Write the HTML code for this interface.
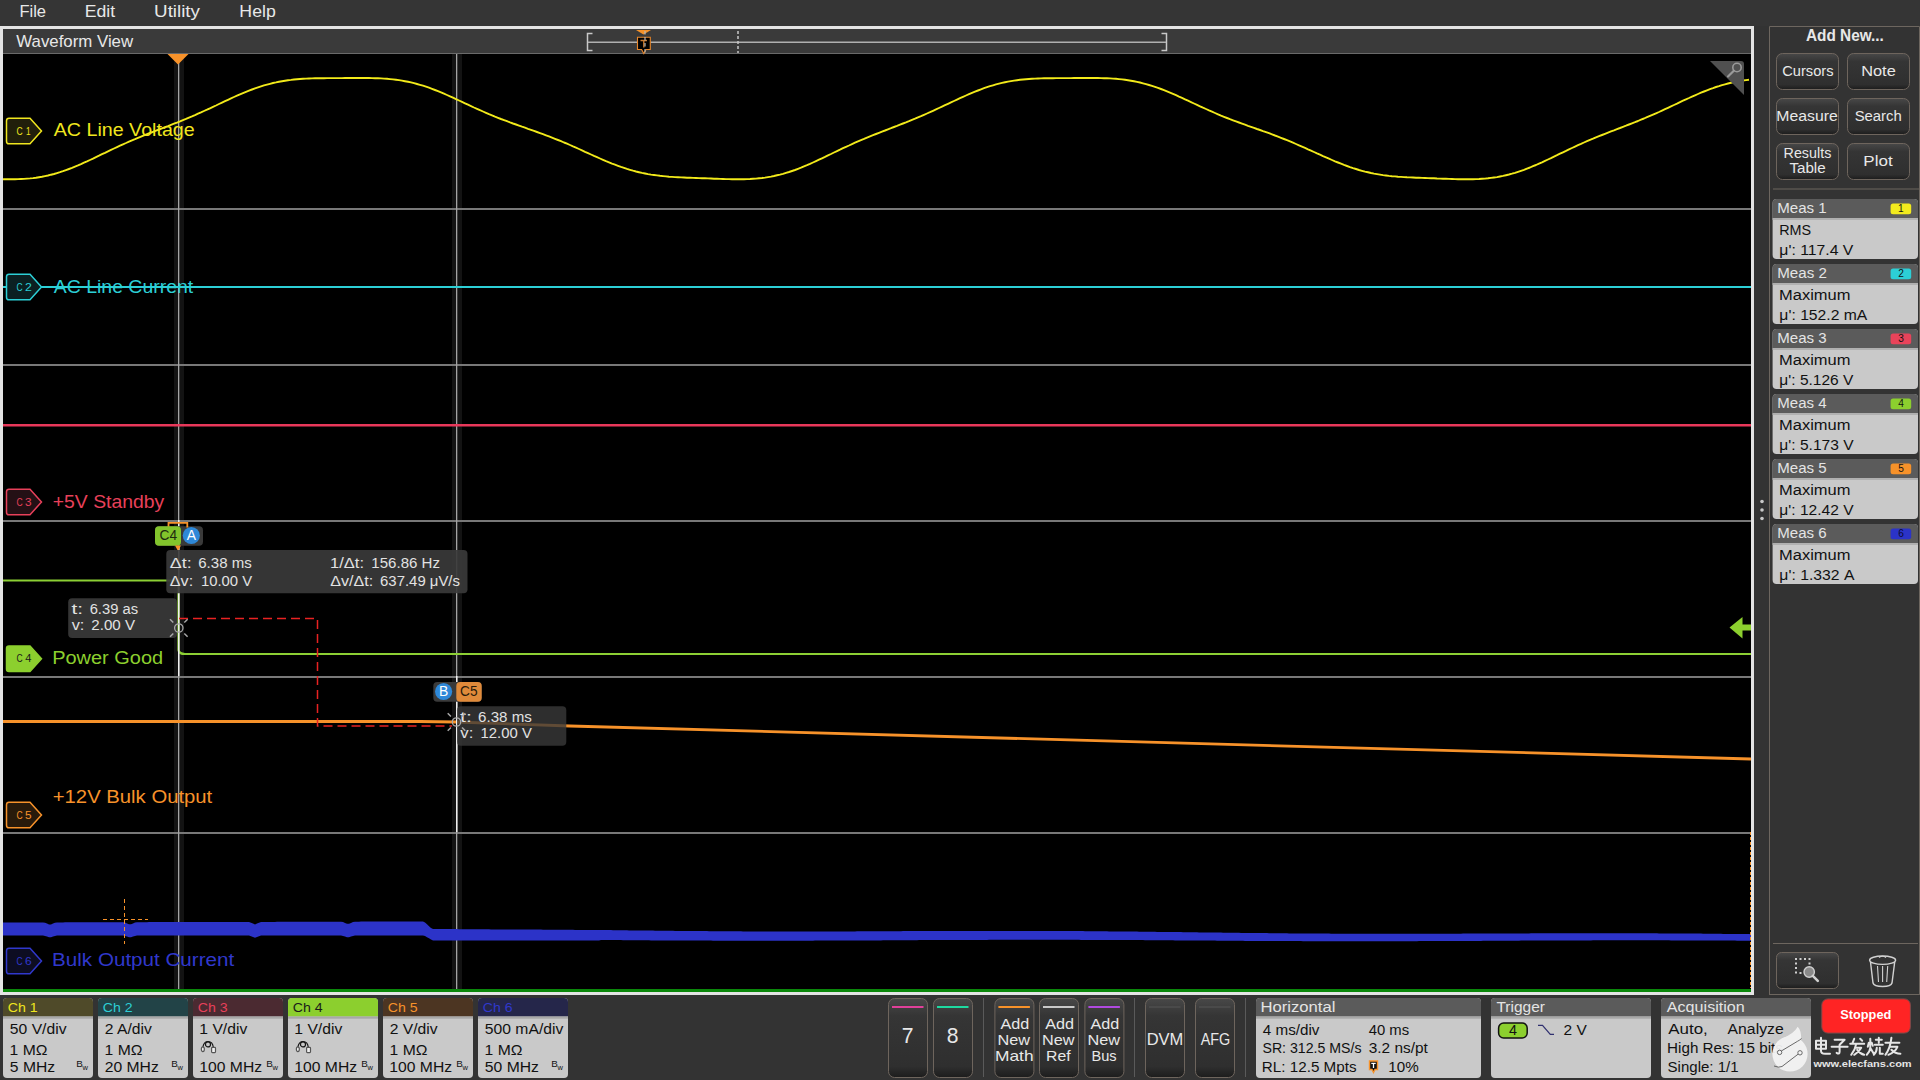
<!DOCTYPE html><html><head><meta charset="utf-8"><style>html,body{margin:0;padding:0;background:#333;overflow:hidden}svg{display:block}text{font-family:"Liberation Sans",sans-serif;white-space:pre}</style></head><body>
<svg width="1920" height="1080" viewBox="0 0 1920 1080">
<defs><linearGradient id="btn" x1="0" y1="0" x2="0" y2="1"><stop offset="0" stop-color="#484848"/><stop offset="0.22" stop-color="#353535"/><stop offset="0.86" stop-color="#2f2f2f"/><stop offset="1" stop-color="#1c1c1c"/></linearGradient><clipPath id="plotclip"><rect x="3" y="54" width="1748" height="935"/></clipPath></defs>
<rect x="0" y="0" width="1920" height="1080" rx="0" fill="#333" />
<rect x="0" y="0" width="1920" height="26" rx="0" fill="#353535" />
<text x="19.48" y="17.00" font-size="16.38" fill="#e8e8e8" textLength="26.59" lengthAdjust="spacingAndGlyphs" >File</text>
<text x="84.79" y="17.00" font-size="16.38" fill="#e8e8e8" textLength="30.35" lengthAdjust="spacingAndGlyphs" >Edit</text>
<text x="154.09" y="17.00" font-size="16.38" fill="#e8e8e8" textLength="45.90" lengthAdjust="spacingAndGlyphs" >Utility</text>
<text x="239.39" y="17.00" font-size="16.38" fill="#e8e8e8" textLength="36.35" lengthAdjust="spacingAndGlyphs" >Help</text>
<rect x="0" y="26" width="1754" height="969" rx="0" fill="#e4e4e4" />
<rect x="3" y="29" width="1748" height="24" rx="0" fill="#3a3a3a" />
<rect x="3" y="53" width="1748" height="1" rx="0" fill="#6a6a6a" />
<rect x="3" y="54" width="1748" height="935" rx="0" fill="#000" />
<rect x="3" y="989" width="1748" height="3" rx="0" fill="#0a870a" />
<text x="16.32" y="46.90" font-size="17.39" fill="#e8e8e8" textLength="116.82" lengthAdjust="spacingAndGlyphs" >Waveform View</text>
<g stroke="#c8c8c8" stroke-width="1.5" fill="none"><path d="M592.5 33.5 H587.5 V50.5 H592.5"/><path d="M1161.5 33.5 H1166.5 V50.5 H1161.5"/></g>
<rect x="588" y="41.5" width="578" height="1.5" rx="0" fill="#b0b0b0" />
<path d="M738 31 V53" stroke="#c8c8c8" stroke-width="1.5" stroke-dasharray="3 2"/>
<path d="M636 30 H651 L643.5 34.6 Z" fill="#f5922a"/>
<path d="M637.5 37.2 H650.3 V49.5 H646 L643.8 53.5 L641.6 49.5 H637.5 Z" fill="#000" stroke="#e8862a" stroke-width="1.1"/>
<path d="M640.5 40.5 H647 M643.8 40.5 V47.5" stroke="#c87a30" stroke-width="1.4"/>
<path d="M645 31 V53" stroke="#b8b8b8" stroke-width="1.2" stroke-dasharray="3.5 2.5"/>
<path d="M1769.5 994.5 V26.5 H1919.5 V994.5 Z" fill="none" stroke="#6d665f" stroke-width="1"/>
<g clip-path="url(#plotclip)">
<rect x="174" y="54" width="10" height="935" rx="0" fill="#131313" />
<rect x="452" y="54" width="10" height="935" rx="0" fill="#131313" />
<rect x="3" y="208" width="1748" height="2" rx="0" fill="#787878" />
<rect x="3" y="364" width="1748" height="2" rx="0" fill="#787878" />
<rect x="3" y="520" width="1748" height="2" rx="0" fill="#787878" />
<rect x="3" y="676" width="1748" height="2" rx="0" fill="#787878" />
<rect x="3" y="832" width="1748" height="2" rx="0" fill="#787878" />
<rect x="178" y="54" width="1.3" height="935" rx="0" fill="#a4a4a4" />
<rect x="456" y="54" width="1.3" height="935" rx="0" fill="#a4a4a4" />
<path d="M3 179.2 L6 179.2 L9 179.3 L12 179.3 L15 179.2 L18 179.1 L21 179.0 L24 178.9 L27 178.6 L30 178.4 L33 178.1 L36 177.7 L39 177.2 L42 176.7 L45 176.1 L48 175.5 L51 174.7 L54 174.0 L57 173.1 L60 172.2 L63 171.2 L66 170.1 L69 169.0 L72 167.9 L75 166.6 L78 165.4 L81 164.1 L84 162.7 L87 161.4 L90 160.0 L93 158.6 L96 157.1 L99 155.7 L102 154.2 L105 152.8 L108 151.3 L111 149.9 L114 148.5 L117 147.1 L120 145.7 L123 144.3 L126 143.0 L129 141.6 L132 140.3 L135 139.1 L138 137.8 L141 136.6 L144 135.4 L147 134.2 L150 133.0 L153 131.8 L156 130.7 L159 129.5 L162 128.4 L165 127.2 L168 126.1 L171 124.9 L174 123.7 L177 122.6 L180 121.4 L183 120.1 L186 118.9 L189 117.6 L192 116.4 L195 115.1 L198 113.7 L201 112.4 L204 111.0 L207 109.7 L210 108.3 L213 106.9 L216 105.5 L219 104.0 L222 102.6 L225 101.2 L228 99.8 L231 98.4 L234 97.0 L237 95.7 L240 94.4 L243 93.1 L246 91.9 L249 90.7 L252 89.5 L255 88.4 L258 87.4 L261 86.4 L264 85.4 L267 84.6 L270 83.8 L273 83.0 L276 82.4 L279 81.7 L282 81.2 L285 80.7 L288 80.2 L291 79.9 L294 79.5 L297 79.2 L300 79.0 L303 78.8 L306 78.6 L309 78.5 L312 78.4 L315 78.3 L318 78.3 L321 78.2 L324 78.2 L327 78.1 L330 78.1 L333 78.1 L336 78.1 L339 78.1 L342 78.1 L345 78.0 L348 78.0 L351 78.0 L354 78.0 L357 78.0 L360 78.0 L363 78.0 L366 78.0 L369 78.0 L372 78.1 L375 78.2 L378 78.3 L381 78.4 L384 78.6 L387 78.8 L390 79.1 L393 79.4 L396 79.7 L399 80.1 L402 80.6 L405 81.2 L408 81.8 L411 82.4 L414 83.2 L417 84.0 L420 84.8 L423 85.7 L426 86.7 L429 87.7 L432 88.8 L435 90.0 L438 91.2 L441 92.4 L444 93.7 L447 95.0 L450 96.3 L453 97.7 L456 99.1 L459 100.5 L462 101.9 L465 103.3 L468 104.7 L471 106.1 L474 107.5 L477 108.8 L480 110.2 L483 111.5 L486 112.8 L489 114.1 L492 115.3 L495 116.6 L498 117.8 L501 119.0 L504 120.1 L507 121.2 L510 122.4 L513 123.5 L516 124.5 L519 125.6 L522 126.7 L525 127.7 L528 128.8 L531 129.8 L534 130.9 L537 132.0 L540 133.1 L543 134.2 L546 135.3 L549 136.4 L552 137.6 L555 138.8 L558 140.0 L561 141.2 L564 142.5 L567 143.7 L570 145.0 L573 146.4 L576 147.7 L579 149.0 L582 150.4 L585 151.8 L588 153.1 L591 154.5 L594 155.9 L597 157.2 L600 158.5 L603 159.8 L606 161.1 L609 162.3 L612 163.6 L615 164.7 L618 165.8 L621 166.9 L624 167.9 L627 168.9 L630 169.8 L633 170.7 L636 171.5 L639 172.2 L642 172.9 L645 173.5 L648 174.1 L651 174.6 L654 175.0 L657 175.4 L660 175.8 L663 176.1 L666 176.4 L669 176.7 L672 176.9 L675 177.1 L678 177.2 L681 177.4 L684 177.5 L687 177.7 L690 177.8 L693 177.9 L696 178.0 L699 178.1 L702 178.2 L705 178.3 L708 178.4 L711 178.5 L714 178.7 L717 178.8 L720 178.9 L723 179.0 L726 179.1 L729 179.1 L732 179.2 L735 179.3 L738 179.3 L741 179.3 L744 179.2 L747 179.1 L750 179.0 L753 178.8 L756 178.6 L759 178.3 L762 178.0 L765 177.6 L768 177.1 L771 176.6 L774 176.0 L777 175.3 L780 174.6 L783 173.8 L786 172.9 L789 172.0 L792 171.0 L795 170.0 L798 168.8 L801 167.7 L804 166.4 L807 165.2 L810 163.9 L813 162.5 L816 161.1 L819 159.7 L822 158.3 L825 156.9 L828 155.4 L831 154.0 L834 152.5 L837 151.1 L840 149.7 L843 148.2 L846 146.8 L849 145.5 L852 144.1 L855 142.7 L858 141.4 L861 140.1 L864 138.9 L867 137.6 L870 136.4 L873 135.2 L876 134.0 L879 132.8 L882 131.6 L885 130.5 L888 129.3 L891 128.2 L894 127.0 L897 125.9 L900 124.7 L903 123.5 L906 122.4 L909 121.2 L912 119.9 L915 118.7 L918 117.4 L921 116.2 L924 114.8 L927 113.5 L930 112.2 L933 110.8 L936 109.4 L939 108.0 L942 106.6 L945 105.2 L948 103.8 L951 102.4 L954 101.0 L957 99.6 L960 98.2 L963 96.8 L966 95.5 L969 94.2 L972 92.9 L975 91.7 L978 90.5 L981 89.3 L984 88.2 L987 87.2 L990 86.2 L993 85.3 L996 84.4 L999 83.6 L1002 82.9 L1005 82.2 L1008 81.6 L1011 81.1 L1014 80.6 L1017 80.2 L1020 79.8 L1023 79.5 L1026 79.2 L1029 79.0 L1032 78.8 L1035 78.6 L1038 78.5 L1041 78.4 L1044 78.3 L1047 78.3 L1050 78.2 L1053 78.2 L1056 78.1 L1059 78.1 L1062 78.1 L1065 78.1 L1068 78.1 L1071 78.1 L1074 78.0 L1077 78.0 L1080 78.0 L1083 78.0 L1086 78.0 L1089 78.0 L1092 78.0 L1095 78.0 L1098 78.0 L1101 78.1 L1104 78.2 L1107 78.3 L1110 78.4 L1113 78.6 L1116 78.8 L1119 79.1 L1122 79.4 L1125 79.8 L1128 80.2 L1131 80.7 L1134 81.3 L1137 81.9 L1140 82.5 L1143 83.3 L1146 84.1 L1149 85.0 L1152 85.9 L1155 86.9 L1158 87.9 L1161 89.0 L1164 90.2 L1167 91.4 L1170 92.6 L1173 93.9 L1176 95.2 L1179 96.6 L1182 97.9 L1185 99.3 L1188 100.7 L1191 102.1 L1194 103.5 L1197 104.9 L1200 106.3 L1203 107.7 L1206 109.0 L1209 110.4 L1212 111.7 L1215 113.0 L1218 114.3 L1221 115.6 L1224 116.8 L1227 118.0 L1230 119.2 L1233 120.3 L1236 121.4 L1239 122.5 L1242 123.6 L1245 124.7 L1248 125.8 L1251 126.8 L1254 127.9 L1257 129.0 L1260 130.0 L1263 131.1 L1266 132.1 L1269 133.2 L1272 134.3 L1275 135.5 L1278 136.6 L1281 137.8 L1284 139.0 L1287 140.2 L1290 141.4 L1293 142.7 L1296 144.0 L1299 145.3 L1302 146.6 L1305 147.9 L1308 149.3 L1311 150.6 L1314 152.0 L1317 153.4 L1320 154.7 L1323 156.1 L1326 157.4 L1329 158.7 L1332 160.0 L1335 161.3 L1338 162.5 L1341 163.7 L1344 164.9 L1347 166.0 L1350 167.1 L1353 168.1 L1356 169.0 L1359 170.0 L1362 170.8 L1365 171.6 L1368 172.3 L1371 173.0 L1374 173.6 L1377 174.1 L1380 174.6 L1383 175.1 L1386 175.5 L1389 175.9 L1392 176.2 L1395 176.4 L1398 176.7 L1401 176.9 L1404 177.1 L1407 177.3 L1410 177.4 L1413 177.5 L1416 177.7 L1419 177.8 L1422 177.9 L1425 178.0 L1428 178.1 L1431 178.2 L1434 178.3 L1437 178.5 L1440 178.6 L1443 178.7 L1446 178.8 L1449 178.9 L1452 179.0 L1455 179.1 L1458 179.2 L1461 179.2 L1464 179.3 L1467 179.3 L1470 179.3 L1473 179.2 L1476 179.1 L1479 179.0 L1482 178.8 L1485 178.6 L1488 178.3 L1491 177.9 L1494 177.5 L1497 177.1 L1500 176.5 L1503 175.9 L1506 175.2 L1509 174.5 L1512 173.7 L1515 172.8 L1518 171.8 L1521 170.8 L1524 169.8 L1527 168.6 L1530 167.5 L1533 166.2 L1536 165.0 L1539 163.6 L1542 162.3 L1545 160.9 L1548 159.5 L1551 158.1 L1554 156.6 L1557 155.2 L1560 153.7 L1563 152.3 L1566 150.9 L1569 149.4 L1572 148.0 L1575 146.6 L1578 145.2 L1581 143.9 L1584 142.5 L1587 141.2 L1590 139.9 L1593 138.7 L1596 137.4 L1599 136.2 L1602 135.0 L1605 133.8 L1608 132.6 L1611 131.4 L1614 130.3 L1617 129.1 L1620 128.0 L1623 126.8 L1626 125.7 L1629 124.5 L1632 123.3 L1635 122.2 L1638 121.0 L1641 119.7 L1644 118.5 L1647 117.2 L1650 115.9 L1653 114.6 L1656 113.3 L1659 112.0 L1662 110.6 L1665 109.2 L1668 107.8 L1671 106.4 L1674 105.0 L1677 103.6 L1680 102.1 L1683 100.7 L1686 99.3 L1689 98.0 L1692 96.6 L1695 95.3 L1698 94.0 L1701 92.7 L1704 91.5 L1707 90.3 L1710 89.1 L1713 88.1 L1716 87.0 L1719 86.1 L1722 85.1 L1725 84.3 L1728 83.5 L1731 82.8 L1734 82.1 L1737 81.5 L1740 81.0 L1743 80.5 L1746 80.1 L1749 79.7" fill="none" stroke="#f2ea1a" stroke-width="1.9" stroke-linejoin="round"/>
<rect x="3" y="286" width="1748" height="2" rx="0" fill="#2ccfd6" />
<path d="M9 118.2 H30 L41.5 131.0 L30 143.8 H9 Q6.5 143.8 6.5 141.2 V120.8 Q6.5 118.2 9 118.2 Z" fill="#211f0b" stroke="#f0e61e" stroke-width="1.5"/>
<text x="16.47" y="134.60" font-size="10.14" fill="#f0e61e" textLength="6.14" lengthAdjust="spacingAndGlyphs" >C</text>
<text x="25.88" y="134.60" font-size="10.14" fill="#f0e61e" textLength="4.60" lengthAdjust="spacingAndGlyphs" >1</text>
<text x="53.75" y="136.30" font-size="19.28" fill="#f0e61e" textLength="140.93" lengthAdjust="spacingAndGlyphs" >AC Line Voltage</text>
<path d="M9 274.2 H30 L41.5 287.0 L30 299.8 H9 Q6.5 299.8 6.5 297.2 V276.8 Q6.5 274.2 9 274.2 Z" fill="#0b2022" stroke="#2ccfd6" stroke-width="1.5"/>
<text x="16.47" y="290.60" font-size="10.14" fill="#2ccfd6" textLength="6.14" lengthAdjust="spacingAndGlyphs" >C</text>
<text x="24.98" y="290.60" font-size="10.14" fill="#2ccfd6" textLength="6.85" lengthAdjust="spacingAndGlyphs" >2</text>
<text x="53.75" y="292.80" font-size="19.28" fill="#2ccfd6" textLength="139.50" lengthAdjust="spacingAndGlyphs" >AC Line Current</text>
<path d="M9 489.2 H30 L41.5 502.0 L30 514.8 H9 Q6.5 514.8 6.5 512.2 V491.8 Q6.5 489.2 9 489.2 Z" fill="#241015" stroke="#e8405a" stroke-width="1.5"/>
<text x="16.47" y="505.60" font-size="10.14" fill="#e8405a" textLength="6.14" lengthAdjust="spacingAndGlyphs" >C</text>
<text x="25.13" y="505.60" font-size="10.14" fill="#e8405a" textLength="6.56" lengthAdjust="spacingAndGlyphs" >3</text>
<text x="52.78" y="507.50" font-size="19.28" fill="#e8405a" textLength="111.56" lengthAdjust="spacingAndGlyphs" >+5V Standby</text>
<path d="M9 646.0 H30 L41.5 658.7 L30 671.5 H9 Q6.5 671.5 6.5 669.0 V648.5 Q6.5 646.0 9 646.0 Z" fill="#8ccf2e" stroke="#8ccf2e" stroke-width="1.5"/>
<text x="16.47" y="662.30" font-size="10.14" fill="#1a1a1a" textLength="6.14" lengthAdjust="spacingAndGlyphs" >C</text>
<text x="25.38" y="662.30" font-size="10.14" fill="#1a1a1a" textLength="6.17" lengthAdjust="spacingAndGlyphs" >4</text>
<text x="52.15" y="663.80" font-size="19.28" fill="#8ccf2e" textLength="110.97" lengthAdjust="spacingAndGlyphs" >Power Good</text>
<path d="M9 802.2 H30 L41.5 815.0 L30 827.8 H9 Q6.5 827.8 6.5 825.2 V804.8 Q6.5 802.2 9 802.2 Z" fill="#281a0b" stroke="#f7922a" stroke-width="1.5"/>
<text x="16.47" y="818.60" font-size="10.14" fill="#f7922a" textLength="6.14" lengthAdjust="spacingAndGlyphs" >C</text>
<text x="25.13" y="818.60" font-size="10.14" fill="#f7922a" textLength="6.56" lengthAdjust="spacingAndGlyphs" >5</text>
<text x="52.74" y="802.90" font-size="19.28" fill="#f7922a" textLength="159.54" lengthAdjust="spacingAndGlyphs" >+12V Bulk Output</text>
<path d="M9 948.2 H30 L41.5 961.0 L30 973.8 H9 Q6.5 973.8 6.5 971.2 V950.8 Q6.5 948.2 9 948.2 Z" fill="#0d0d22" stroke="#3038cc" stroke-width="1.5"/>
<text x="16.47" y="964.60" font-size="10.14" fill="#3038cc" textLength="6.14" lengthAdjust="spacingAndGlyphs" >C</text>
<text x="25.00" y="964.60" font-size="10.14" fill="#3038cc" textLength="6.70" lengthAdjust="spacingAndGlyphs" >6</text>
<text x="52.10" y="965.90" font-size="19.28" fill="#3038cc" textLength="182.10" lengthAdjust="spacingAndGlyphs" >Bulk Output Current</text>
<rect x="3" y="424" width="1748" height="2.5" rx="0" fill="#e8385a" />
<path d="M3 580.5 L178.5 580.5 L178.5 650 Q179 654 185 654 L1751 654" fill="none" stroke="#8ccf34" stroke-width="2.2"/>
<path d="M3 721.5 L420 721.5 L456 722 L570 726 L1751 759" fill="none" stroke="#f7922a" stroke-width="2.8"/>
<path d="M3 922.5 L5 922.5 L7 922.5 L9 922.5 L11 922.5 L13 922.5 L15 922.5 L17 922.5 L19 922.5 L21 922.5 L23 922.4 L25 922.4 L27 922.4 L29 922.4 L31 922.4 L33 922.4 L35 922.4 L37 922.4 L39 922.4 L41 922.4 L43 922.4 L45 922.8 L47 923.6 L49 924.5 L51 924.5 L53 923.6 L55 922.8 L57 922.4 L59 922.4 L61 922.4 L63 922.4 L65 922.3 L67 922.3 L69 922.3 L71 922.3 L73 922.3 L75 922.3 L77 922.3 L79 922.3 L81 922.3 L83 922.3 L85 922.3 L87 922.3 L89 922.3 L91 922.3 L93 922.3 L95 922.3 L97 922.3 L99 922.3 L101 922.3 L103 922.3 L105 922.3 L107 922.2 L109 922.2 L111 922.2 L113 922.2 L115 922.2 L117 922.2 L119 922.2 L121 922.2 L123 922.2 L125 922.6 L127 923.5 L129 924.3 L131 924.3 L133 923.4 L135 922.6 L137 922.2 L139 922.2 L141 922.2 L143 922.2 L145 922.2 L147 922.2 L149 922.1 L151 922.1 L153 922.1 L155 922.1 L157 922.1 L159 922.1 L161 922.1 L163 922.1 L165 922.1 L167 922.1 L169 922.1 L171 922.1 L173 922.1 L175 922.1 L177 922.1 L179 922.1 L181 922.1 L183 922.1 L185 922.1 L187 922.1 L189 922.1 L191 922.0 L193 922.0 L195 922.0 L197 922.0 L199 922.0 L201 922.0 L203 922.0 L205 922.0 L207 922.0 L209 922.0 L211 922.0 L213 922.0 L215 922.0 L217 922.0 L219 922.0 L221 922.0 L223 922.0 L225 922.0 L227 922.0 L229 922.0 L231 922.0 L233 922.0 L235 921.9 L237 921.9 L239 921.9 L241 921.9 L243 921.9 L245 921.9 L247 921.9 L249 921.9 L251 922.7 L253 923.6 L255 924.4 L257 923.6 L259 922.7 L261 921.9 L263 921.9 L265 921.9 L267 921.9 L269 921.9 L271 921.9 L273 921.9 L275 921.9 L277 921.8 L279 921.8 L281 921.8 L283 921.8 L285 921.8 L287 921.8 L289 921.8 L291 921.8 L293 921.8 L295 921.8 L297 921.8 L299 921.8 L301 921.8 L303 921.8 L305 921.8 L307 921.8 L309 921.8 L311 921.8 L313 921.8 L315 921.8 L317 921.8 L319 921.7 L321 921.7 L323 921.7 L325 921.7 L327 921.7 L329 921.7 L331 921.7 L333 921.7 L335 921.7 L337 921.7 L339 921.7 L341 921.7 L343 922.1 L345 922.9 L347 923.8 L349 923.8 L351 922.9 L353 922.1 L355 921.7 L357 921.7 L359 921.7 L361 921.6 L363 921.6 L365 921.6 L367 921.6 L369 921.6 L371 921.6 L373 921.6 L375 921.6 L377 921.6 L379 921.6 L381 921.6 L383 921.6 L385 921.6 L387 921.6 L389 921.6 L391 921.6 L393 921.6 L395 921.6 L397 921.6 L399 921.6 L401 921.6 L403 921.5 L405 921.5 L407 921.5 L409 921.5 L411 921.5 L413 921.5 L415 921.5 L417 921.5 L419 921.5 L421 921.5 L423 921.5 L425 922.4 L427 924.3 L429 926.2 L431 928.1 L433 929.0 L435 929.0 L437 929.0 L439 929.0 L441 929.1 L443 929.1 L445 929.1 L447 929.1 L449 929.1 L451 929.1 L453 929.1 L455 929.1 L457 929.1 L459 929.2 L461 929.2 L463 929.2 L465 929.2 L467 929.2 L469 929.2 L471 929.2 L473 929.2 L475 929.3 L477 929.3 L479 929.3 L481 929.3 L483 929.3 L485 929.3 L487 929.3 L489 929.3 L491 929.4 L493 929.4 L495 929.4 L497 929.4 L499 929.4 L501 929.4 L503 929.4 L505 929.4 L507 929.4 L509 929.5 L511 929.5 L513 929.5 L515 929.5 L517 929.5 L519 929.5 L521 929.5 L523 929.5 L525 929.6 L527 929.6 L529 929.6 L531 929.6 L533 929.6 L535 929.6 L537 929.6 L539 929.6 L541 929.6 L543 929.7 L545 929.7 L547 929.7 L549 929.7 L551 929.7 L553 929.7 L555 929.7 L557 929.7 L559 929.8 L561 929.8 L563 929.8 L565 929.8 L567 929.8 L569 929.8 L571 929.8 L573 929.8 L575 929.9 L577 929.9 L579 929.9 L581 929.9 L583 929.9 L585 929.9 L587 929.9 L589 929.9 L591 929.9 L593 930.0 L595 930.0 L597 930.0 L599 930.0 L601 930.0 L603 930.0 L605 930.1 L607 930.1 L609 930.1 L611 930.1 L613 930.2 L615 930.2 L617 930.2 L619 930.2 L621 930.3 L623 930.3 L625 930.3 L627 930.3 L629 930.4 L631 930.4 L633 930.4 L635 930.4 L637 930.4 L639 930.5 L641 930.5 L643 930.5 L645 930.5 L647 930.6 L649 930.6 L651 930.6 L653 930.6 L655 930.7 L657 930.7 L659 930.7 L661 930.7 L663 930.7 L665 930.8 L667 930.8 L669 930.8 L671 930.8 L673 930.8 L675 930.9 L677 930.9 L679 930.9 L681 930.9 L683 930.9 L685 931.0 L687 931.0 L689 931.0 L691 931.0 L693 931.0 L695 931.0 L697 931.1 L699 931.1 L701 931.1 L703 931.1 L705 931.1 L707 931.1 L709 931.2 L711 931.2 L713 931.2 L715 931.2 L717 931.2 L719 931.2 L721 931.2 L723 931.3 L725 931.3 L727 931.3 L729 931.3 L731 931.3 L733 931.3 L735 931.3 L737 931.3 L739 931.3 L741 931.3 L743 931.4 L745 931.4 L747 931.4 L749 931.4 L751 931.4 L753 931.4 L755 931.4 L757 931.4 L759 931.4 L761 931.4 L763 931.4 L765 931.4 L767 931.4 L769 931.4 L771 931.4 L773 931.5 L775 931.5 L777 931.5 L779 931.5 L781 931.5 L783 931.5 L785 931.5 L787 931.5 L789 931.5 L791 931.5 L793 931.5 L795 931.5 L797 931.5 L799 931.5 L801 931.5 L803 931.5 L805 931.5 L807 931.5 L809 931.5 L811 931.5 L813 931.5 L815 931.5 L817 931.5 L819 931.5 L821 931.4 L823 931.4 L825 931.4 L827 931.4 L829 931.4 L831 931.4 L833 931.4 L835 931.4 L837 931.4 L839 931.4 L841 931.4 L843 931.4 L845 931.4 L847 931.4 L849 931.4 L851 931.4 L853 931.4 L855 931.4 L857 931.3 L859 931.3 L861 931.3 L863 931.3 L865 931.3 L867 931.3 L869 931.3 L871 931.3 L873 931.3 L875 931.3 L877 931.3 L879 931.3 L881 931.2 L883 931.2 L885 931.2 L887 931.2 L889 931.2 L891 931.2 L893 931.2 L895 931.2 L897 931.2 L899 931.2 L901 931.2 L903 931.1 L905 931.1 L907 931.1 L909 931.1 L911 931.1 L913 931.1 L915 931.1 L917 931.1 L919 931.1 L921 931.1 L923 931.1 L925 931.1 L927 931.0 L929 931.0 L931 931.0 L933 931.0 L935 931.0 L937 931.0 L939 931.0 L941 931.0 L943 931.0 L945 931.0 L947 931.0 L949 931.0 L951 931.0 L953 930.9 L955 930.9 L957 930.9 L959 930.9 L961 930.9 L963 930.9 L965 930.9 L967 930.9 L969 930.9 L971 930.9 L973 930.9 L975 930.9 L977 930.9 L979 930.9 L981 930.9 L983 930.9 L985 930.9 L987 930.9 L989 930.9 L991 930.9 L993 930.9 L995 930.9 L997 930.9 L999 930.9 L1001 930.9 L1003 930.9 L1005 930.9 L1007 930.9 L1009 930.9 L1011 930.9 L1013 930.9 L1015 930.9 L1017 930.9 L1019 930.9 L1021 930.9 L1023 930.9 L1025 930.9 L1027 930.9 L1029 930.9 L1031 930.9 L1033 930.9 L1035 930.9 L1037 930.9 L1039 930.9 L1041 930.9 L1043 930.9 L1045 930.9 L1047 930.9 L1049 931.0 L1051 931.0 L1053 931.0 L1055 931.0 L1057 931.0 L1059 931.0 L1061 931.0 L1063 931.0 L1065 931.0 L1067 931.0 L1069 931.1 L1071 931.1 L1073 931.1 L1075 931.1 L1077 931.1 L1079 931.1 L1081 931.1 L1083 931.1 L1085 931.2 L1087 931.2 L1089 931.2 L1091 931.2 L1093 931.2 L1095 931.2 L1097 931.3 L1099 931.3 L1101 931.3 L1103 931.3 L1105 931.3 L1107 931.3 L1109 931.4 L1111 931.4 L1113 931.4 L1115 931.4 L1117 931.4 L1119 931.4 L1121 931.5 L1123 931.5 L1125 931.5 L1127 931.5 L1129 931.5 L1131 931.6 L1133 931.6 L1135 931.6 L1137 931.6 L1139 931.7 L1141 931.7 L1143 931.7 L1145 931.7 L1147 931.7 L1149 931.8 L1151 931.8 L1153 931.8 L1155 931.8 L1157 931.9 L1159 931.9 L1161 931.9 L1163 931.9 L1165 931.9 L1167 932.0 L1169 932.0 L1171 932.0 L1173 932.0 L1175 932.1 L1177 932.1 L1179 932.1 L1181 932.1 L1183 932.2 L1185 932.2 L1187 932.2 L1189 932.2 L1191 932.3 L1193 932.3 L1195 932.3 L1197 932.3 L1199 932.4 L1201 932.4 L1203 932.4 L1205 932.4 L1207 932.5 L1209 932.5 L1211 932.5 L1213 932.5 L1215 932.6 L1217 932.6 L1219 932.6 L1221 932.6 L1223 932.7 L1225 932.7 L1227 932.7 L1229 932.7 L1231 932.8 L1233 932.8 L1235 932.8 L1237 932.8 L1239 932.8 L1241 932.9 L1243 932.9 L1245 932.9 L1247 932.9 L1249 933.0 L1251 933.0 L1253 933.0 L1255 933.0 L1257 933.0 L1259 933.1 L1261 933.1 L1263 933.1 L1265 933.1 L1267 933.1 L1269 933.2 L1271 933.2 L1273 933.2 L1275 933.2 L1277 933.2 L1279 933.3 L1281 933.3 L1283 933.3 L1285 933.3 L1287 933.3 L1289 933.4 L1291 933.4 L1293 933.4 L1295 933.4 L1297 933.4 L1299 933.4 L1301 933.5 L1303 933.5 L1305 933.5 L1307 933.5 L1309 933.5 L1311 933.5 L1313 933.5 L1315 933.6 L1317 933.6 L1319 933.6 L1321 933.6 L1323 933.6 L1325 933.6 L1327 933.6 L1329 933.6 L1331 933.7 L1333 933.7 L1335 933.7 L1337 933.7 L1339 933.7 L1341 933.7 L1343 933.7 L1345 933.7 L1347 933.7 L1349 933.7 L1351 933.7 L1353 933.7 L1355 933.8 L1357 933.8 L1359 933.8 L1361 933.8 L1363 933.8 L1365 933.8 L1367 933.8 L1369 933.8 L1371 933.8 L1373 933.8 L1375 933.8 L1377 933.8 L1379 933.8 L1381 933.8 L1383 933.8 L1385 933.8 L1387 933.8 L1389 933.8 L1391 933.8 L1393 933.8 L1395 933.8 L1397 933.8 L1399 933.8 L1401 933.8 L1403 933.8 L1405 933.8 L1407 933.8 L1409 933.8 L1411 933.8 L1413 933.8 L1415 933.8 L1417 933.8 L1419 933.8 L1421 933.8 L1423 933.8 L1425 933.8 L1427 933.8 L1429 933.8 L1431 933.8 L1433 933.7 L1435 933.7 L1437 933.7 L1439 933.7 L1441 933.7 L1443 933.7 L1445 933.7 L1447 933.7 L1449 933.7 L1451 933.7 L1453 933.7 L1455 933.7 L1457 933.7 L1459 933.7 L1461 933.7 L1463 933.6 L1465 933.6 L1467 933.6 L1469 933.6 L1471 933.6 L1473 933.6 L1475 933.6 L1477 933.6 L1479 933.6 L1481 933.6 L1483 933.6 L1485 933.6 L1487 933.5 L1489 933.5 L1491 933.5 L1493 933.5 L1495 933.5 L1497 933.5 L1499 933.5 L1501 933.5 L1503 933.5 L1505 933.5 L1507 933.5 L1509 933.4 L1511 933.4 L1513 933.4 L1515 933.4 L1517 933.4 L1519 933.4 L1521 933.4 L1523 933.4 L1525 933.4 L1527 933.4 L1529 933.4 L1531 933.3 L1533 933.3 L1535 933.3 L1537 933.3 L1539 933.3 L1541 933.3 L1543 933.3 L1545 933.3 L1547 933.3 L1549 933.3 L1551 933.3 L1553 933.3 L1555 933.3 L1557 933.3 L1559 933.3 L1561 933.3 L1563 933.2 L1565 933.2 L1567 933.2 L1569 933.2 L1571 933.2 L1573 933.2 L1575 933.2 L1577 933.2 L1579 933.2 L1581 933.2 L1583 933.2 L1585 933.2 L1587 933.2 L1589 933.2 L1591 933.2 L1593 933.2 L1595 933.2 L1597 933.2 L1599 933.2 L1601 933.2 L1603 933.2 L1605 933.2 L1607 933.2 L1609 933.2 L1611 933.2 L1613 933.2 L1615 933.2 L1617 933.2 L1619 933.2 L1621 933.2 L1623 933.2 L1625 933.2 L1627 933.2 L1629 933.2 L1631 933.2 L1633 933.2 L1635 933.3 L1637 933.3 L1639 933.3 L1641 933.3 L1643 933.3 L1645 933.3 L1647 933.3 L1649 933.3 L1651 933.3 L1653 933.3 L1655 933.3 L1657 933.3 L1659 933.4 L1661 933.4 L1663 933.4 L1665 933.4 L1667 933.4 L1669 933.4 L1671 933.4 L1673 933.4 L1675 933.4 L1677 933.5 L1679 933.5 L1681 933.5 L1683 933.5 L1685 933.5 L1687 933.5 L1689 933.5 L1691 933.6 L1693 933.6 L1695 933.6 L1697 933.6 L1699 933.6 L1701 933.6 L1703 933.7 L1705 933.7 L1707 933.7 L1709 933.7 L1711 933.7 L1713 933.8 L1715 933.8 L1717 933.8 L1719 933.8 L1721 933.8 L1723 933.9 L1725 933.9 L1727 933.9 L1729 933.9 L1731 933.9 L1733 934.0 L1735 934.0 L1737 934.0 L1739 934.0 L1741 934.0 L1743 934.1 L1745 934.1 L1747 934.1 L1749 934.1 L1751 934.2 L1751 940.7 L1749 940.7 L1747 940.7 L1745 940.7 L1743 940.7 L1741 940.7 L1739 940.7 L1737 940.7 L1735 940.6 L1733 940.6 L1731 940.6 L1729 940.6 L1727 940.6 L1725 940.6 L1723 940.6 L1721 940.6 L1719 940.5 L1717 940.5 L1715 940.5 L1713 940.5 L1711 940.5 L1709 940.5 L1707 940.5 L1705 940.5 L1703 940.5 L1701 940.5 L1699 940.5 L1697 940.4 L1695 940.4 L1693 940.4 L1691 940.4 L1689 940.4 L1687 940.4 L1685 940.4 L1683 940.4 L1681 940.4 L1679 940.4 L1677 940.4 L1675 940.4 L1673 940.4 L1671 940.4 L1669 940.3 L1667 940.3 L1665 940.3 L1663 940.3 L1661 940.3 L1659 940.3 L1657 940.3 L1655 940.3 L1653 940.3 L1651 940.3 L1649 940.3 L1647 940.3 L1645 940.3 L1643 940.3 L1641 940.3 L1639 940.3 L1637 940.3 L1635 940.3 L1633 940.3 L1631 940.3 L1629 940.3 L1627 940.3 L1625 940.3 L1623 940.3 L1621 940.3 L1619 940.3 L1617 940.3 L1615 940.3 L1613 940.3 L1611 940.3 L1609 940.3 L1607 940.3 L1605 940.3 L1603 940.3 L1601 940.3 L1599 940.3 L1597 940.3 L1595 940.3 L1593 940.3 L1591 940.4 L1589 940.4 L1587 940.4 L1585 940.4 L1583 940.4 L1581 940.4 L1579 940.4 L1577 940.4 L1575 940.4 L1573 940.4 L1571 940.4 L1569 940.4 L1567 940.4 L1565 940.4 L1563 940.4 L1561 940.5 L1559 940.5 L1557 940.5 L1555 940.5 L1553 940.5 L1551 940.5 L1549 940.5 L1547 940.5 L1545 940.5 L1543 940.5 L1541 940.5 L1539 940.6 L1537 940.6 L1535 940.6 L1533 940.6 L1531 940.6 L1529 940.6 L1527 940.6 L1525 940.6 L1523 940.6 L1521 940.6 L1519 940.7 L1517 940.7 L1515 940.7 L1513 940.7 L1511 940.7 L1509 940.7 L1507 940.7 L1505 940.7 L1503 940.7 L1501 940.7 L1499 940.8 L1497 940.8 L1495 940.8 L1493 940.8 L1491 940.8 L1489 940.8 L1487 940.8 L1485 940.8 L1483 940.8 L1481 940.9 L1479 940.9 L1477 940.9 L1475 940.9 L1473 940.9 L1471 940.9 L1469 940.9 L1467 940.9 L1465 940.9 L1463 941.0 L1461 941.0 L1459 941.0 L1457 941.0 L1455 941.0 L1453 941.0 L1451 941.0 L1449 941.0 L1447 941.0 L1445 941.0 L1443 941.0 L1441 941.1 L1439 941.1 L1437 941.1 L1435 941.1 L1433 941.1 L1431 941.1 L1429 941.1 L1427 941.1 L1425 941.1 L1423 941.1 L1421 941.1 L1419 941.1 L1417 941.2 L1415 941.2 L1413 941.2 L1411 941.2 L1409 941.2 L1407 941.2 L1405 941.2 L1403 941.2 L1401 941.2 L1399 941.2 L1397 941.2 L1395 941.2 L1393 941.2 L1391 941.2 L1389 941.2 L1387 941.2 L1385 941.2 L1383 941.2 L1381 941.2 L1379 941.2 L1377 941.2 L1375 941.2 L1373 941.2 L1371 941.2 L1369 941.3 L1367 941.3 L1365 941.3 L1363 941.3 L1361 941.3 L1359 941.3 L1357 941.3 L1355 941.3 L1353 941.3 L1351 941.3 L1349 941.3 L1347 941.2 L1345 941.2 L1343 941.2 L1341 941.2 L1339 941.2 L1337 941.2 L1335 941.2 L1333 941.2 L1331 941.2 L1329 941.2 L1327 941.2 L1325 941.2 L1323 941.2 L1321 941.2 L1319 941.2 L1317 941.2 L1315 941.2 L1313 941.2 L1311 941.2 L1309 941.2 L1307 941.2 L1305 941.2 L1303 941.2 L1301 941.1 L1299 941.1 L1297 941.1 L1295 941.1 L1293 941.1 L1291 941.1 L1289 941.1 L1287 941.1 L1285 941.1 L1283 941.1 L1281 941.1 L1279 941.0 L1277 941.0 L1275 941.0 L1273 941.0 L1271 941.0 L1269 941.0 L1267 941.0 L1265 941.0 L1263 941.0 L1261 940.9 L1259 940.9 L1257 940.9 L1255 940.9 L1253 940.9 L1251 940.9 L1249 940.9 L1247 940.9 L1245 940.9 L1243 940.8 L1241 940.8 L1239 940.8 L1237 940.8 L1235 940.8 L1233 940.8 L1231 940.8 L1229 940.7 L1227 940.7 L1225 940.7 L1223 940.7 L1221 940.7 L1219 940.7 L1217 940.7 L1215 940.6 L1213 940.6 L1211 940.6 L1209 940.6 L1207 940.6 L1205 940.6 L1203 940.6 L1201 940.5 L1199 940.5 L1197 940.5 L1195 940.5 L1193 940.5 L1191 940.5 L1189 940.5 L1187 940.4 L1185 940.4 L1183 940.4 L1181 940.4 L1179 940.4 L1177 940.4 L1175 940.4 L1173 940.3 L1171 940.3 L1169 940.3 L1167 940.3 L1165 940.3 L1163 940.3 L1161 940.3 L1159 940.3 L1157 940.2 L1155 940.2 L1153 940.2 L1151 940.2 L1149 940.2 L1147 940.2 L1145 940.2 L1143 940.1 L1141 940.1 L1139 940.1 L1137 940.1 L1135 940.1 L1133 940.1 L1131 940.1 L1129 940.1 L1127 940.1 L1125 940.0 L1123 940.0 L1121 940.0 L1119 940.0 L1117 940.0 L1115 940.0 L1113 940.0 L1111 940.0 L1109 940.0 L1107 940.0 L1105 939.9 L1103 939.9 L1101 939.9 L1099 939.9 L1097 939.9 L1095 939.9 L1093 939.9 L1091 939.9 L1089 939.9 L1087 939.9 L1085 939.9 L1083 939.9 L1081 939.9 L1079 939.8 L1077 939.8 L1075 939.8 L1073 939.8 L1071 939.8 L1069 939.8 L1067 939.8 L1065 939.8 L1063 939.8 L1061 939.8 L1059 939.8 L1057 939.8 L1055 939.8 L1053 939.8 L1051 939.8 L1049 939.8 L1047 939.8 L1045 939.8 L1043 939.8 L1041 939.8 L1039 939.8 L1037 939.8 L1035 939.8 L1033 939.8 L1031 939.8 L1029 939.8 L1027 939.8 L1025 939.8 L1023 939.8 L1021 939.8 L1019 939.8 L1017 939.8 L1015 939.8 L1013 939.8 L1011 939.8 L1009 939.8 L1007 939.8 L1005 939.8 L1003 939.8 L1001 939.8 L999 939.8 L997 939.8 L995 939.8 L993 939.8 L991 939.8 L989 939.8 L987 939.9 L985 939.9 L983 939.9 L981 939.9 L979 939.9 L977 939.9 L975 939.9 L973 939.9 L971 939.9 L969 939.9 L967 939.9 L965 939.9 L963 939.9 L961 939.9 L959 940.0 L957 940.0 L955 940.0 L953 940.0 L951 940.0 L949 940.0 L947 940.0 L945 940.0 L943 940.0 L941 940.0 L939 940.0 L937 940.1 L935 940.1 L933 940.1 L931 940.1 L929 940.1 L927 940.1 L925 940.1 L923 940.1 L921 940.1 L919 940.1 L917 940.2 L915 940.2 L913 940.2 L911 940.2 L909 940.2 L907 940.2 L905 940.2 L903 940.2 L901 940.2 L899 940.3 L897 940.3 L895 940.3 L893 940.3 L891 940.3 L889 940.3 L887 940.3 L885 940.3 L883 940.3 L881 940.4 L879 940.4 L877 940.4 L875 940.4 L873 940.4 L871 940.4 L869 940.4 L867 940.4 L865 940.4 L863 940.4 L861 940.5 L859 940.5 L857 940.5 L855 940.5 L853 940.5 L851 940.5 L849 940.5 L847 940.5 L845 940.5 L843 940.5 L841 940.6 L839 940.6 L837 940.6 L835 940.6 L833 940.6 L831 940.6 L829 940.6 L827 940.6 L825 940.6 L823 940.6 L821 940.6 L819 940.6 L817 940.6 L815 940.6 L813 940.7 L811 940.7 L809 940.7 L807 940.7 L805 940.7 L803 940.7 L801 940.7 L799 940.7 L797 940.7 L795 940.7 L793 940.7 L791 940.7 L789 940.7 L787 940.7 L785 940.7 L783 940.7 L781 940.7 L779 940.7 L777 940.7 L775 940.7 L773 940.7 L771 940.7 L769 940.7 L767 940.7 L765 940.7 L763 940.7 L761 940.7 L759 940.7 L757 940.7 L755 940.7 L753 940.7 L751 940.7 L749 940.7 L747 940.7 L745 940.7 L743 940.7 L741 940.7 L739 940.7 L737 940.7 L735 940.7 L733 940.7 L731 940.7 L729 940.7 L727 940.7 L725 940.7 L723 940.7 L721 940.7 L719 940.7 L717 940.7 L715 940.7 L713 940.7 L711 940.6 L709 940.6 L707 940.6 L705 940.6 L703 940.6 L701 940.6 L699 940.6 L697 940.6 L695 940.6 L693 940.6 L691 940.6 L689 940.6 L687 940.6 L685 940.5 L683 940.5 L681 940.5 L679 940.5 L677 940.5 L675 940.5 L673 940.5 L671 940.5 L669 940.5 L667 940.4 L665 940.4 L663 940.4 L661 940.4 L659 940.4 L657 940.4 L655 940.4 L653 940.4 L651 940.4 L649 940.3 L647 940.3 L645 940.3 L643 940.3 L641 940.3 L639 940.3 L637 940.3 L635 940.2 L633 940.2 L631 940.2 L629 940.2 L627 940.2 L625 940.2 L623 940.2 L621 940.1 L619 940.1 L617 940.1 L615 940.1 L613 940.1 L611 940.1 L609 940.1 L607 940.1 L605 940.0 L603 940.0 L601 940.0 L599 940.5 L597 940.5 L595 940.5 L593 940.5 L591 940.5 L589 940.5 L587 940.5 L585 940.5 L583 940.5 L581 940.5 L579 940.5 L577 940.5 L575 940.5 L573 940.5 L571 940.5 L569 940.5 L567 940.5 L565 940.5 L563 940.5 L561 940.5 L559 940.5 L557 940.5 L555 940.5 L553 940.5 L551 940.5 L549 940.5 L547 940.5 L545 940.5 L543 940.5 L541 940.5 L539 940.5 L537 940.5 L535 940.5 L533 940.5 L531 940.5 L529 940.5 L527 940.5 L525 940.5 L523 940.5 L521 940.5 L519 940.5 L517 940.5 L515 940.5 L513 940.5 L511 940.5 L509 940.5 L507 940.5 L505 940.5 L503 940.5 L501 940.5 L499 940.5 L497 940.5 L495 940.5 L493 940.5 L491 940.5 L489 940.5 L487 940.5 L485 940.5 L483 940.5 L481 940.5 L479 940.5 L477 940.5 L475 940.5 L473 940.5 L471 940.5 L469 940.5 L467 940.5 L465 940.5 L463 940.5 L461 940.5 L459 940.5 L457 940.5 L455 940.5 L453 940.5 L451 940.5 L449 940.5 L447 940.5 L445 940.5 L443 940.5 L441 940.5 L439 940.5 L437 940.5 L435 940.5 L433 940.5 L431 939.4 L429 938.3 L427 937.2 L425 936.1 L423 935.5 L421 935.5 L419 935.5 L417 935.5 L415 935.5 L413 935.5 L411 935.5 L409 935.5 L407 935.5 L405 935.5 L403 935.5 L401 935.5 L399 935.5 L397 935.5 L395 935.5 L393 935.5 L391 935.5 L389 935.5 L387 935.5 L385 935.5 L383 935.5 L381 935.5 L379 935.5 L377 935.5 L375 935.5 L373 935.5 L371 935.5 L369 935.5 L367 935.5 L365 935.5 L363 935.5 L361 935.5 L359 935.5 L357 935.5 L355 935.5 L353 935.9 L351 936.6 L349 937.3 L347 937.3 L345 936.6 L343 935.9 L341 935.5 L339 935.5 L337 935.5 L335 935.5 L333 935.5 L331 935.5 L329 935.5 L327 935.5 L325 935.5 L323 935.5 L321 935.5 L319 935.5 L317 935.5 L315 935.5 L313 935.5 L311 935.5 L309 935.5 L307 935.5 L305 935.5 L303 935.5 L301 935.5 L299 935.5 L297 935.5 L295 935.5 L293 935.5 L291 935.5 L289 935.5 L287 935.5 L285 935.5 L283 935.5 L281 935.5 L279 935.5 L277 935.5 L275 935.5 L273 935.5 L271 935.5 L269 935.5 L267 935.5 L265 935.5 L263 935.5 L261 935.5 L259 936.2 L257 937.0 L255 937.7 L253 937.0 L251 936.2 L249 935.5 L247 935.5 L245 935.5 L243 935.5 L241 935.5 L239 935.5 L237 935.5 L235 935.5 L233 935.5 L231 935.5 L229 935.5 L227 935.5 L225 935.5 L223 935.5 L221 935.5 L219 935.5 L217 935.5 L215 935.5 L213 935.5 L211 935.5 L209 935.5 L207 935.5 L205 935.5 L203 935.5 L201 935.5 L199 935.5 L197 935.5 L195 935.5 L193 935.5 L191 935.5 L189 935.5 L187 935.5 L185 935.5 L183 935.5 L181 935.5 L179 935.5 L177 935.5 L175 935.5 L173 935.5 L171 935.5 L169 935.5 L167 935.5 L165 935.5 L163 935.5 L161 935.5 L159 935.5 L157 935.5 L155 935.5 L153 935.5 L151 935.5 L149 935.5 L147 935.5 L145 935.5 L143 935.5 L141 935.5 L139 935.5 L137 935.5 L135 935.9 L133 936.6 L131 937.3 L129 937.3 L127 936.6 L125 935.9 L123 935.5 L121 935.5 L119 935.5 L117 935.5 L115 935.5 L113 935.5 L111 935.5 L109 935.5 L107 935.5 L105 935.5 L103 935.5 L101 935.5 L99 935.5 L97 935.5 L95 935.5 L93 935.5 L91 935.5 L89 935.5 L87 935.5 L85 935.5 L83 935.5 L81 935.5 L79 935.5 L77 935.5 L75 935.5 L73 935.5 L71 935.5 L69 935.5 L67 935.5 L65 935.5 L63 935.5 L61 935.5 L59 935.5 L57 935.5 L55 935.9 L53 936.6 L51 937.3 L49 937.3 L47 936.6 L45 935.9 L43 935.5 L41 935.5 L39 935.5 L37 935.5 L35 935.5 L33 935.5 L31 935.5 L29 935.5 L27 935.5 L25 935.5 L23 935.5 L21 935.5 L19 935.5 L17 935.5 L15 935.5 L13 935.5 L11 935.5 L9 935.5 L7 935.5 L5 935.5 L3 935.5 Z" fill="#2c33c8"/>
<rect x="178" y="520" width="1.5" height="156" rx="0" fill="#f0f0f0" />
<rect x="456" y="676" width="1.5" height="156" rx="0" fill="#f0f0f0" />
<path d="M167.5 54 H188.5 L178 64.5 Z" fill="#f7922a"/>
<path d="M179 618.5 H317.5 V726 H452" fill="none" stroke="#e82222" stroke-width="1.5" stroke-dasharray="9 5"/>
<path d="M124.5 899 V944 M103 919.5 H148" fill="none" stroke="#f7922a" stroke-width="1" stroke-dasharray="4 3"/>
<path d="M1750.5 832 V988" fill="none" stroke="#f7922a" stroke-width="1" stroke-dasharray="3 2"/>
<path d="M1729.5 627.5 L1742.5 617 V624.5 H1751 V630.5 H1742.5 V638.5 Z" fill="#8ccf2e"/>
<path d="M1710 61 H1741 Q1744 61 1744 64 V95 Z" fill="#505050"/>
<circle cx="1737" cy="67.5" r="4.2" fill="none" stroke="#9a9a9a" stroke-width="1.6"/><path d="M1733.8 70.8 L1728 76.5" stroke="#9a9a9a" stroke-width="2.2" stroke-linecap="round"/>
<rect x="155" y="526.3" width="48" height="19.5" rx="4" fill="#3a3a3a" />
<path d="M168.5 527.5 V522.8 H187.3 V527.5" fill="none" stroke="#f7922a" stroke-width="1.8"/>
<rect x="155" y="526.3" width="26" height="19.5" rx="4" fill="#82c42c" />
<path d="M175 545.5 H181 L178 551 Z" fill="#f7922a"/>
<text x="159.61" y="539.80" font-size="13.91" fill="#1e2a10" textLength="17.54" lengthAdjust="spacingAndGlyphs" >C4</text>
<circle cx="191.3" cy="535.5" r="8.6" fill="#2e88d8"/>
<text x="186.67" y="539.80" font-size="13.91" fill="#ffffff" textLength="9.28" lengthAdjust="spacingAndGlyphs" >A</text>
<rect x="166.3" y="550" width="301.2" height="43.3" rx="4" fill="#3a3a3a" fill-opacity="0.92"/>
<text x="169.76" y="567.90" font-size="15.07" fill="#e2e2e2" textLength="21.91" lengthAdjust="spacingAndGlyphs" >Δt:</text>
<text x="198.25" y="567.90" font-size="15.07" fill="#e2e2e2" textLength="53.51" lengthAdjust="spacingAndGlyphs" >6.38 ms</text>
<text x="169.82" y="585.80" font-size="15.07" fill="#e2e2e2" textLength="23.35" lengthAdjust="spacingAndGlyphs" >Δv:</text>
<text x="200.89" y="585.80" font-size="15.07" fill="#e2e2e2" textLength="51.22" lengthAdjust="spacingAndGlyphs" >10.00 V</text>
<text x="330.06" y="567.90" font-size="15.07" fill="#e2e2e2" textLength="33.97" lengthAdjust="spacingAndGlyphs" >1/Δt:</text>
<text x="371.37" y="567.90" font-size="15.07" fill="#e2e2e2" textLength="68.56" lengthAdjust="spacingAndGlyphs" >156.86 Hz</text>
<text x="330.32" y="585.80" font-size="15.07" fill="#e2e2e2" textLength="42.90" lengthAdjust="spacingAndGlyphs" >Δv/Δt:</text>
<text x="380.05" y="585.80" font-size="15.07" fill="#e2e2e2" textLength="79.93" lengthAdjust="spacingAndGlyphs" >637.49 μV/s</text>
<rect x="68.2" y="598.2" width="108.8" height="39.7" rx="4" fill="#3a3a3a" fill-opacity="0.92"/>
<text x="71.49" y="613.80" font-size="13.77" fill="#e2e2e2" textLength="11.61" lengthAdjust="spacingAndGlyphs" >t:</text>
<text x="89.66" y="613.80" font-size="13.77" fill="#e2e2e2" textLength="48.36" lengthAdjust="spacingAndGlyphs" >6.39 as</text>
<text x="71.72" y="629.80" font-size="13.77" fill="#e2e2e2" textLength="12.70" lengthAdjust="spacingAndGlyphs" >v:</text>
<text x="91.34" y="629.80" font-size="13.77" fill="#e2e2e2" textLength="43.75" lengthAdjust="spacingAndGlyphs" >2.00 V</text>
<circle cx="178.8" cy="628" r="4.2" fill="none" stroke="#a8a8a8" stroke-width="1.3"/>
<path d="M184.3 633.5 L187.6 636.8" stroke="#a8a8a8" stroke-width="1.5"/>
<path d="M184.3 622.5 L187.6 619.2" stroke="#a8a8a8" stroke-width="1.5"/>
<path d="M173.3 633.5 L170.0 636.8" stroke="#a8a8a8" stroke-width="1.5"/>
<path d="M173.3 622.5 L170.0 619.2" stroke="#a8a8a8" stroke-width="1.5"/>
<rect x="433.3" y="682" width="48.4" height="19.8" rx="4" fill="#3a3a3a" />
<circle cx="443.6" cy="691.5" r="8.6" fill="#2e88d8"/>
<text x="438.97" y="695.60" font-size="13.91" fill="#ffffff" textLength="9.28" lengthAdjust="spacingAndGlyphs" >B</text>
<rect x="456.3" y="682" width="25.4" height="19.8" rx="4" fill="#e08a3a" />
<text x="460.12" y="695.50" font-size="14.49" fill="#2a1a0a" textLength="17.48" lengthAdjust="spacingAndGlyphs" >C5</text>
<rect x="457" y="706.3" width="109.3" height="39.5" rx="4" fill="#3a3a3a" fill-opacity="0.8"/>
<text x="460.08" y="721.70" font-size="14.49" fill="#e2e2e2" textLength="11.85" lengthAdjust="spacingAndGlyphs" >t:</text>
<text x="478.04" y="721.70" font-size="14.49" fill="#e2e2e2" textLength="53.82" lengthAdjust="spacingAndGlyphs" >6.38 ms</text>
<text x="460.32" y="737.90" font-size="14.49" fill="#e2e2e2" textLength="13.04" lengthAdjust="spacingAndGlyphs" >v:</text>
<text x="480.59" y="737.90" font-size="14.49" fill="#e2e2e2" textLength="51.22" lengthAdjust="spacingAndGlyphs" >12.00 V</text>
<circle cx="456.5" cy="722" r="4.2" fill="none" stroke="#a8a8a8" stroke-width="1.3"/>
<path d="M462.0 727.5 L465.3 730.8" stroke="#a8a8a8" stroke-width="1.5"/>
<path d="M462.0 716.5 L465.3 713.2" stroke="#a8a8a8" stroke-width="1.5"/>
<path d="M451.0 727.5 L447.7 730.8" stroke="#a8a8a8" stroke-width="1.5"/>
<path d="M451.0 716.5 L447.7 713.2" stroke="#a8a8a8" stroke-width="1.5"/>
</g>
<text x="1805.92" y="41.20" font-size="15.94" fill="#e8e8e8" font-weight="bold" textLength="77.95" lengthAdjust="spacingAndGlyphs" >Add New...</text>
<rect x="1776.5" y="53.5" width="62.0" height="36.0" rx="6" fill="url(#btn)" stroke="#6e655d" stroke-width="1"/>
<rect x="1847.5" y="53.5" width="62.0" height="36.0" rx="6" fill="url(#btn)" stroke="#6e655d" stroke-width="1"/>
<rect x="1776.5" y="98.5" width="62.0" height="36.0" rx="6" fill="url(#btn)" stroke="#6e655d" stroke-width="1"/>
<rect x="1847.5" y="98.5" width="62.0" height="36.0" rx="6" fill="url(#btn)" stroke="#6e655d" stroke-width="1"/>
<rect x="1776.5" y="143.5" width="62.0" height="36.0" rx="6" fill="url(#btn)" stroke="#6e655d" stroke-width="1"/>
<rect x="1847.5" y="143.5" width="62.0" height="36.0" rx="6" fill="url(#btn)" stroke="#6e655d" stroke-width="1"/>
<text x="1782.27" y="75.80" font-size="15.22" fill="#e8e8e8" textLength="51.25" lengthAdjust="spacingAndGlyphs" >Cursors</text>
<text x="1861.19" y="75.80" font-size="15.22" fill="#e8e8e8" textLength="34.58" lengthAdjust="spacingAndGlyphs" >Note</text>
<text x="1776.24" y="120.80" font-size="15.22" fill="#e8e8e8" textLength="61.49" lengthAdjust="spacingAndGlyphs" >Measure</text>
<text x="1854.63" y="120.80" font-size="15.22" fill="#e8e8e8" textLength="47.19" lengthAdjust="spacingAndGlyphs" >Search</text>
<text x="1783.55" y="157.80" font-size="15.22" fill="#e8e8e8" textLength="47.74" lengthAdjust="spacingAndGlyphs" >Results</text>
<text x="1789.40" y="173.30" font-size="15.22" fill="#e8e8e8" textLength="36.30" lengthAdjust="spacingAndGlyphs" >Table</text>
<text x="1863.34" y="165.80" font-size="15.22" fill="#e8e8e8" textLength="29.30" lengthAdjust="spacingAndGlyphs" >Plot</text>
<rect x="1773" y="188.5" width="146" height="1" rx="0" fill="#6d665f" />
<rect x="1772.6" y="199" width="145.4" height="60" rx="4" fill="#c9c9c9"/>
<path d="M1772.6 218 V203 Q1772.6 199 1776.6 199 H1914 Q1918 199 1918 203 V218 Z" fill="#5b5b5b"/>
<rect x="1772.6" y="218" width="145.4" height="2" rx="0" fill="#b0b0b0" />
<text x="1777.29" y="213.00" font-size="15.22" fill="#e4e4e4" textLength="49.48" lengthAdjust="spacingAndGlyphs" >Meas 1</text>
<rect x="1890.6" y="203.6" width="20.6" height="10.7" rx="2.5" fill="#f2ea1e"/>
<text x="1898.03" y="212.20" font-size="10.14" fill="#111" textLength="5.64" lengthAdjust="spacingAndGlyphs" >1</text>
<text x="1779.25" y="235.30" font-size="14.93" fill="#111" textLength="31.93" lengthAdjust="spacingAndGlyphs" >RMS</text>
<text x="1779.38" y="255.00" font-size="14.93" fill="#111" textLength="74.02" lengthAdjust="spacingAndGlyphs" >μ': 117.4 V</text>
<rect x="1772.6" y="264" width="145.4" height="60" rx="4" fill="#c9c9c9"/>
<path d="M1772.6 283 V268 Q1772.6 264 1776.6 264 H1914 Q1918 264 1918 268 V283 Z" fill="#5b5b5b"/>
<rect x="1772.6" y="283" width="145.4" height="2" rx="0" fill="#b0b0b0" />
<text x="1777.29" y="278.00" font-size="15.22" fill="#e4e4e4" textLength="49.56" lengthAdjust="spacingAndGlyphs" >Meas 2</text>
<rect x="1890.6" y="268.6" width="20.6" height="10.7" rx="2.5" fill="#2ccfd6"/>
<text x="1898.18" y="277.20" font-size="10.14" fill="#111" textLength="5.64" lengthAdjust="spacingAndGlyphs" >2</text>
<text x="1779.08" y="300.30" font-size="14.93" fill="#111" textLength="71.37" lengthAdjust="spacingAndGlyphs" >Maximum</text>
<text x="1779.38" y="320.00" font-size="14.93" fill="#111" textLength="87.97" lengthAdjust="spacingAndGlyphs" >μ': 152.2 mA</text>
<rect x="1772.6" y="329" width="145.4" height="60" rx="4" fill="#c9c9c9"/>
<path d="M1772.6 348 V333 Q1772.6 329 1776.6 329 H1914 Q1918 329 1918 333 V348 Z" fill="#5b5b5b"/>
<rect x="1772.6" y="348" width="145.4" height="2" rx="0" fill="#b0b0b0" />
<text x="1777.29" y="343.00" font-size="15.22" fill="#e4e4e4" textLength="49.40" lengthAdjust="spacingAndGlyphs" >Meas 3</text>
<rect x="1890.6" y="333.6" width="20.6" height="10.7" rx="2.5" fill="#e8435a"/>
<text x="1898.18" y="342.20" font-size="10.14" fill="#111" textLength="5.64" lengthAdjust="spacingAndGlyphs" >3</text>
<text x="1779.08" y="365.30" font-size="14.93" fill="#111" textLength="71.37" lengthAdjust="spacingAndGlyphs" >Maximum</text>
<text x="1779.39" y="385.00" font-size="14.93" fill="#111" textLength="73.99" lengthAdjust="spacingAndGlyphs" >μ': 5.126 V</text>
<rect x="1772.6" y="394" width="145.4" height="60" rx="4" fill="#c9c9c9"/>
<path d="M1772.6 413 V398 Q1772.6 394 1776.6 394 H1914 Q1918 394 1918 398 V413 Z" fill="#5b5b5b"/>
<rect x="1772.6" y="413" width="145.4" height="2" rx="0" fill="#b0b0b0" />
<text x="1777.30" y="408.00" font-size="15.22" fill="#e4e4e4" textLength="49.24" lengthAdjust="spacingAndGlyphs" >Meas 4</text>
<rect x="1890.6" y="398.6" width="20.6" height="10.7" rx="2.5" fill="#8ccf2e"/>
<text x="1898.24" y="407.20" font-size="10.14" fill="#111" textLength="5.64" lengthAdjust="spacingAndGlyphs" >4</text>
<text x="1779.08" y="430.30" font-size="14.93" fill="#111" textLength="71.37" lengthAdjust="spacingAndGlyphs" >Maximum</text>
<text x="1779.39" y="450.00" font-size="14.93" fill="#111" textLength="74.19" lengthAdjust="spacingAndGlyphs" >μ': 5.173 V</text>
<rect x="1772.6" y="459" width="145.4" height="60" rx="4" fill="#c9c9c9"/>
<path d="M1772.6 478 V463 Q1772.6 459 1776.6 459 H1914 Q1918 459 1918 463 V478 Z" fill="#5b5b5b"/>
<rect x="1772.6" y="478" width="145.4" height="2" rx="0" fill="#b0b0b0" />
<text x="1777.29" y="473.00" font-size="15.22" fill="#e4e4e4" textLength="49.40" lengthAdjust="spacingAndGlyphs" >Meas 5</text>
<rect x="1890.6" y="463.6" width="20.6" height="10.7" rx="2.5" fill="#f7922a"/>
<text x="1898.18" y="472.20" font-size="10.14" fill="#111" textLength="5.64" lengthAdjust="spacingAndGlyphs" >5</text>
<text x="1779.08" y="495.30" font-size="14.93" fill="#111" textLength="71.37" lengthAdjust="spacingAndGlyphs" >Maximum</text>
<text x="1779.39" y="515.00" font-size="14.93" fill="#111" textLength="74.19" lengthAdjust="spacingAndGlyphs" >μ': 12.42 V</text>
<rect x="1772.6" y="524" width="145.4" height="60" rx="4" fill="#c9c9c9"/>
<path d="M1772.6 543 V528 Q1772.6 524 1776.6 524 H1914 Q1918 524 1918 528 V543 Z" fill="#5b5b5b"/>
<rect x="1772.6" y="543" width="145.4" height="2" rx="0" fill="#b0b0b0" />
<text x="1777.29" y="538.00" font-size="15.22" fill="#e4e4e4" textLength="49.40" lengthAdjust="spacingAndGlyphs" >Meas 6</text>
<rect x="1890.6" y="528.6" width="20.6" height="10.7" rx="2.5" fill="#2b33c8"/>
<text x="1898.13" y="537.20" font-size="10.14" fill="#0a0a30" textLength="5.64" lengthAdjust="spacingAndGlyphs" >6</text>
<text x="1779.08" y="560.30" font-size="14.93" fill="#111" textLength="71.37" lengthAdjust="spacingAndGlyphs" >Maximum</text>
<text x="1779.38" y="580.00" font-size="14.93" fill="#111" textLength="75.02" lengthAdjust="spacingAndGlyphs" >μ': 1.332 A</text>
<circle cx="1762" cy="501.5" r="1.8" fill="#c8c8c8"/>
<circle cx="1762" cy="510" r="1.8" fill="#c8c8c8"/>
<circle cx="1762" cy="518.5" r="1.8" fill="#c8c8c8"/>
<rect x="1773" y="943" width="145" height="1" rx="0" fill="#6d665f" />
<rect x="1776.5" y="952.5" width="62.0" height="36.0" rx="5" fill="url(#btn)" stroke="#6e655d" stroke-width="1"/>
<g fill="#d0d0d0"><rect x="1795" y="958" width="2" height="2"/><rect x="1799.5" y="958" width="2" height="2"/><rect x="1804" y="958" width="2" height="2"/><rect x="1808.5" y="958" width="2" height="2"/><rect x="1808.5" y="962.5" width="2" height="2"/><rect x="1795" y="962.5" width="2" height="2"/><rect x="1795" y="967" width="2" height="2"/><rect x="1795" y="971.5" width="2" height="2"/><rect x="1799.5" y="972" width="2" height="2"/></g>
<circle cx="1809.2" cy="972" r="5.2" fill="#8a8a8a" stroke="#d0d0d0" stroke-width="1.4"/><path d="M1812.8 975.8 L1817.8 980.8" stroke="#d0d0d0" stroke-width="2.6" stroke-linecap="round"/>
<g fill="none" stroke="#d2d2d2" stroke-width="1.4"><ellipse cx="1882.6" cy="960.2" rx="13" ry="4.2"/><path d="M1870.5 962 L1873 983 Q1874 986.5 1882.6 986.5 Q1891 986.5 1892 983 L1894.7 962"/><path d="M1877.5 966 L1878.5 982 M1882.6 966 V982 M1887.7 966 L1886.7 982" stroke-width="1.1"/><path d="M1879 957.5 Q1882.6 955 1886 957.5" stroke-width="1.2"/></g>
<rect x="1769" y="994" width="151" height="1" rx="0" fill="#6d665f" />
<rect x="3" y="998" width="90" height="80" rx="4" fill="#c9c9c9"/>
<path d="M3 1016.5 V1002 Q3 998 7 998 H89 Q93 998 93 1002 V1016.5 Z" fill="#4f4a29"/>
<rect x="3" y="1016.5" width="90" height="2.2" rx="0" fill="#a8a8a8" />
<text x="7.79" y="1012.00" font-size="13.33" fill="#f0e61e" textLength="29.85" lengthAdjust="spacingAndGlyphs" >Ch 1</text>
<text x="9.87" y="1034.40" font-size="15.07" fill="#111" textLength="56.64" lengthAdjust="spacingAndGlyphs" >50 V/div</text>
<text x="9.62" y="1054.60" font-size="15.07" fill="#111" textLength="37.85" lengthAdjust="spacingAndGlyphs" >1 MΩ</text>
<text x="9.87" y="1072.20" font-size="15.07" fill="#111" textLength="45.29" lengthAdjust="spacingAndGlyphs" >5 MHz</text>
<text x="76.21" y="1067.20" font-size="9.86" fill="#111" textLength="6.57" lengthAdjust="spacingAndGlyphs" >B</text>
<text x="82.50" y="1070.00" font-size="7.54" fill="#111" textLength="5.44" lengthAdjust="spacingAndGlyphs" >w</text>
<rect x="98" y="998" width="90" height="80" rx="4" fill="#c9c9c9"/>
<path d="M98 1016.5 V1002 Q98 998 102 998 H184 Q188 998 188 1002 V1016.5 Z" fill="#224347"/>
<rect x="98" y="1016.5" width="90" height="2.2" rx="0" fill="#a8a8a8" />
<text x="102.79" y="1012.00" font-size="13.33" fill="#2ccfd6" textLength="29.85" lengthAdjust="spacingAndGlyphs" >Ch 2</text>
<text x="104.72" y="1034.40" font-size="15.07" fill="#111" textLength="47.06" lengthAdjust="spacingAndGlyphs" >2 A/div</text>
<text x="104.62" y="1054.60" font-size="15.07" fill="#111" textLength="37.85" lengthAdjust="spacingAndGlyphs" >1 MΩ</text>
<text x="104.72" y="1072.20" font-size="15.07" fill="#111" textLength="54.01" lengthAdjust="spacingAndGlyphs" >20 MHz</text>
<text x="171.21" y="1067.20" font-size="9.86" fill="#111" textLength="6.57" lengthAdjust="spacingAndGlyphs" >B</text>
<text x="177.50" y="1070.00" font-size="7.54" fill="#111" textLength="5.44" lengthAdjust="spacingAndGlyphs" >w</text>
<rect x="193" y="998" width="90" height="80" rx="4" fill="#c9c9c9"/>
<path d="M193 1016.5 V1002 Q193 998 197 998 H279 Q283 998 283 1002 V1016.5 Z" fill="#4b2a31"/>
<rect x="193" y="1016.5" width="90" height="2.2" rx="0" fill="#a8a8a8" />
<text x="197.79" y="1012.00" font-size="13.33" fill="#e8405a" textLength="29.85" lengthAdjust="spacingAndGlyphs" >Ch 3</text>
<text x="199.32" y="1034.40" font-size="15.07" fill="#111" textLength="47.92" lengthAdjust="spacingAndGlyphs" >1 V/div</text>
<g transform="translate(201,1041.5)" fill="none" stroke="#151515" stroke-width="1.2"><path d="M1.9 5.3 Q3 0 7 0 Q11.6 0 12.3 5.8"/><circle cx="7" cy="2.9" r="2.5"/><ellipse cx="1.85" cy="7.8" rx="1.5" ry="2.4" fill="#f0f0f0" stroke="#555"/><rect x="10.6" y="5.9" width="3.9" height="5.2" rx="0.8" fill="#f0f0f0" stroke="#555"/></g>
<text x="199.32" y="1072.20" font-size="15.07" fill="#111" textLength="62.73" lengthAdjust="spacingAndGlyphs" >100 MHz</text>
<text x="266.21" y="1067.20" font-size="9.86" fill="#111" textLength="6.57" lengthAdjust="spacingAndGlyphs" >B</text>
<text x="272.50" y="1070.00" font-size="7.54" fill="#111" textLength="5.44" lengthAdjust="spacingAndGlyphs" >w</text>
<rect x="288" y="998" width="90" height="80" rx="4" fill="#c9c9c9"/>
<path d="M288 1016.5 V1002 Q288 998 292 998 H374 Q378 998 378 1002 V1016.5 Z" fill="#8ccf2e"/>
<rect x="288" y="1016.5" width="90" height="2.2" rx="0" fill="#a8a8a8" />
<text x="292.79" y="1012.00" font-size="13.33" fill="#1a1a1a" textLength="29.85" lengthAdjust="spacingAndGlyphs" >Ch 4</text>
<text x="294.32" y="1034.40" font-size="15.07" fill="#111" textLength="47.92" lengthAdjust="spacingAndGlyphs" >1 V/div</text>
<g transform="translate(296,1041.5)" fill="none" stroke="#151515" stroke-width="1.2"><path d="M1.9 5.3 Q3 0 7 0 Q11.6 0 12.3 5.8"/><circle cx="7" cy="2.9" r="2.5"/><ellipse cx="1.85" cy="7.8" rx="1.5" ry="2.4" fill="#f0f0f0" stroke="#555"/><rect x="10.6" y="5.9" width="3.9" height="5.2" rx="0.8" fill="#f0f0f0" stroke="#555"/></g>
<text x="294.32" y="1072.20" font-size="15.07" fill="#111" textLength="62.73" lengthAdjust="spacingAndGlyphs" >100 MHz</text>
<text x="361.21" y="1067.20" font-size="9.86" fill="#111" textLength="6.57" lengthAdjust="spacingAndGlyphs" >B</text>
<text x="367.50" y="1070.00" font-size="7.54" fill="#111" textLength="5.44" lengthAdjust="spacingAndGlyphs" >w</text>
<rect x="383" y="998" width="90" height="80" rx="4" fill="#c9c9c9"/>
<path d="M383 1016.5 V1002 Q383 998 387 998 H469 Q473 998 473 1002 V1016.5 Z" fill="#4c3522"/>
<rect x="383" y="1016.5" width="90" height="2.2" rx="0" fill="#a8a8a8" />
<text x="387.79" y="1012.00" font-size="13.33" fill="#f7922a" textLength="29.85" lengthAdjust="spacingAndGlyphs" >Ch 5</text>
<text x="389.72" y="1034.40" font-size="15.07" fill="#111" textLength="47.92" lengthAdjust="spacingAndGlyphs" >2 V/div</text>
<text x="389.62" y="1054.60" font-size="15.07" fill="#111" textLength="37.85" lengthAdjust="spacingAndGlyphs" >1 MΩ</text>
<text x="389.32" y="1072.20" font-size="15.07" fill="#111" textLength="62.73" lengthAdjust="spacingAndGlyphs" >100 MHz</text>
<text x="456.21" y="1067.20" font-size="9.86" fill="#111" textLength="6.57" lengthAdjust="spacingAndGlyphs" >B</text>
<text x="462.50" y="1070.00" font-size="7.54" fill="#111" textLength="5.44" lengthAdjust="spacingAndGlyphs" >w</text>
<rect x="478" y="998" width="90" height="80" rx="4" fill="#c9c9c9"/>
<path d="M478 1016.5 V1002 Q478 998 482 998 H564 Q568 998 568 1002 V1016.5 Z" fill="#25264a"/>
<rect x="478" y="1016.5" width="90" height="2.2" rx="0" fill="#a8a8a8" />
<text x="482.79" y="1012.00" font-size="13.33" fill="#3038cc" textLength="29.85" lengthAdjust="spacingAndGlyphs" >Ch 6</text>
<text x="484.87" y="1034.40" font-size="15.07" fill="#111" textLength="78.42" lengthAdjust="spacingAndGlyphs" >500 mA/div</text>
<text x="484.62" y="1054.60" font-size="15.07" fill="#111" textLength="37.85" lengthAdjust="spacingAndGlyphs" >1 MΩ</text>
<text x="484.87" y="1072.20" font-size="15.07" fill="#111" textLength="54.01" lengthAdjust="spacingAndGlyphs" >50 MHz</text>
<text x="551.21" y="1067.20" font-size="9.86" fill="#111" textLength="6.57" lengthAdjust="spacingAndGlyphs" >B</text>
<text x="557.50" y="1070.00" font-size="7.54" fill="#111" textLength="5.44" lengthAdjust="spacingAndGlyphs" >w</text>
<rect x="888.5" y="998.5" width="39" height="79" rx="6" fill="url(#btn)" stroke="#6e655d" stroke-width="1"/>
<rect x="892" y="1006" width="31.5" height="2" rx="0" fill="#e0409a" />
<rect x="933.5" y="998.5" width="39" height="79" rx="6" fill="url(#btn)" stroke="#6e655d" stroke-width="1"/>
<rect x="937" y="1006" width="31.5" height="2" rx="0" fill="#1ed9a0" />
<text x="901.63" y="1043.10" font-size="21.16" fill="#e8e8e8" textLength="11.77" lengthAdjust="spacingAndGlyphs" >7</text>
<text x="946.78" y="1043.10" font-size="21.16" fill="#e8e8e8" textLength="11.77" lengthAdjust="spacingAndGlyphs" >8</text>
<rect x="983.0" y="998" width="1" height="79" rx="0" fill="#5a5a5a" />
<rect x="1134.0" y="998" width="1" height="79" rx="0" fill="#5a5a5a" />
<rect x="1245.0" y="998" width="1" height="79" rx="0" fill="#5a5a5a" />
<rect x="994.9" y="998.5" width="39" height="79" rx="6" fill="url(#btn)" stroke="#6e655d" stroke-width="1"/>
<rect x="998.4" y="1006" width="31.5" height="2" rx="0" fill="#f7922a" />
<text x="1000.55" y="1028.50" font-size="14.78" fill="#e8e8e8" textLength="28.74" lengthAdjust="spacingAndGlyphs" >Add</text>
<text x="997.45" y="1044.60" font-size="14.78" fill="#e8e8e8" textLength="32.53" lengthAdjust="spacingAndGlyphs" >New</text>
<text x="995.01" y="1060.80" font-size="14.78" fill="#e8e8e8" textLength="38.57" lengthAdjust="spacingAndGlyphs" >Math</text>
<rect x="1039.5" y="998.5" width="39" height="79" rx="6" fill="url(#btn)" stroke="#6e655d" stroke-width="1"/>
<rect x="1043" y="1006" width="31.5" height="2" rx="0" fill="#c8c8c8" />
<text x="1045.15" y="1028.50" font-size="14.78" fill="#e8e8e8" textLength="28.74" lengthAdjust="spacingAndGlyphs" >Add</text>
<text x="1042.05" y="1044.60" font-size="14.78" fill="#e8e8e8" textLength="32.53" lengthAdjust="spacingAndGlyphs" >New</text>
<text x="1046.09" y="1060.80" font-size="14.78" fill="#e8e8e8" textLength="24.50" lengthAdjust="spacingAndGlyphs" >Ref</text>
<rect x="1084.9" y="998.5" width="39" height="79" rx="6" fill="url(#btn)" stroke="#6e655d" stroke-width="1"/>
<rect x="1088.4" y="1006" width="31.5" height="2" rx="0" fill="#b04ae0" />
<text x="1090.55" y="1028.50" font-size="14.78" fill="#e8e8e8" textLength="28.74" lengthAdjust="spacingAndGlyphs" >Add</text>
<text x="1087.45" y="1044.60" font-size="14.78" fill="#e8e8e8" textLength="32.53" lengthAdjust="spacingAndGlyphs" >New</text>
<text x="1091.48" y="1060.80" font-size="14.78" fill="#e8e8e8" textLength="25.15" lengthAdjust="spacingAndGlyphs" >Bus</text>
<rect x="1145.5" y="998.5" width="39" height="79" rx="6" fill="url(#btn)" stroke="#6e655d" stroke-width="1"/>
<rect x="1149" y="1006" width="31.5" height="2" rx="0" fill="#4a4a4a" />
<text x="1146.68" y="1045.20" font-size="15.94" fill="#e8e8e8" textLength="36.68" lengthAdjust="spacingAndGlyphs" >DVM</text>
<rect x="1195.5" y="998.5" width="39" height="79" rx="6" fill="url(#btn)" stroke="#6e655d" stroke-width="1"/>
<rect x="1199" y="1006" width="31.5" height="2" rx="0" fill="#4a4a4a" />
<text x="1200.70" y="1045.20" font-size="15.94" fill="#e8e8e8" textLength="29.62" lengthAdjust="spacingAndGlyphs" >AFG</text>
<rect x="1256" y="998" width="225" height="80" rx="4" fill="#c9c9c9"/>
<path d="M1256 1016.5 V1002 Q1256 998 1260 998 H1477 Q1481 998 1481 1002 V1016.5 Z" fill="#5b5b5b"/>
<rect x="1256" y="1016.5" width="225" height="2.2" rx="0" fill="#a8a8a8" />
<text x="1260.47" y="1011.90" font-size="15.36" fill="#e4e4e4" textLength="74.95" lengthAdjust="spacingAndGlyphs" >Horizontal</text>
<text x="1262.80" y="1034.75" font-size="15.07" fill="#111" textLength="56.65" lengthAdjust="spacingAndGlyphs" >4 ms/div</text>
<text x="1368.70" y="1034.75" font-size="15.07" fill="#111" textLength="40.49" lengthAdjust="spacingAndGlyphs" >40 ms</text>
<text x="1262.46" y="1053.10" font-size="15.07" fill="#111" textLength="99.00" lengthAdjust="spacingAndGlyphs" >SR: 312.5 MS/s</text>
<text x="1368.78" y="1053.10" font-size="15.07" fill="#111" textLength="59.01" lengthAdjust="spacingAndGlyphs" >3.2 ns/pt</text>
<text x="1261.88" y="1071.90" font-size="15.07" fill="#111" textLength="94.65" lengthAdjust="spacingAndGlyphs" >RL: 12.5 Mpts</text>
<text x="1388.26" y="1071.90" font-size="15.07" fill="#111" textLength="30.39" lengthAdjust="spacingAndGlyphs" >10%</text>
<path d="M1369.5 1061 H1377.5 V1069.5 H1375 L1373.5 1072.5 L1372 1069.5 H1369.5 Z" fill="#111" stroke="#f7922a" stroke-width="1.4"/><path d="M1371.3 1063.3 H1375.7 M1373.5 1063.3 V1068" stroke="#fff" stroke-width="1.3"/>
<rect x="1491" y="998" width="160" height="80" rx="4" fill="#c9c9c9"/>
<path d="M1491 1016.5 V1002 Q1491 998 1495 998 H1647 Q1651 998 1651 1002 V1016.5 Z" fill="#5b5b5b"/>
<rect x="1491" y="1016.5" width="160" height="2.2" rx="0" fill="#a8a8a8" />
<text x="1496.49" y="1011.90" font-size="15.36" fill="#e4e4e4" textLength="48.45" lengthAdjust="spacingAndGlyphs" >Trigger</text>
<rect x="1498.6" y="1023" width="28.6" height="15" rx="5" fill="#8ccf2e" stroke="#111" stroke-width="1.5"/>
<text x="1509.09" y="1034.60" font-size="14.35" fill="#111" textLength="7.98" lengthAdjust="spacingAndGlyphs" >4</text>
<path d="M1538 1025.3 H1542.5 L1550.3 1034.3 H1554" fill="none" stroke="#303070" stroke-width="1.2"/>
<text x="1563.62" y="1034.60" font-size="15.36" fill="#111" textLength="23.27" lengthAdjust="spacingAndGlyphs" >2 V</text>
<rect x="1661" y="998" width="150" height="80" rx="4" fill="#c9c9c9"/>
<path d="M1661 1016.5 V1002 Q1661 998 1665 998 H1807 Q1811 998 1811 1002 V1016.5 Z" fill="#5b5b5b"/>
<rect x="1661" y="1016.5" width="150" height="2.2" rx="0" fill="#a8a8a8" />
<text x="1666.80" y="1011.90" font-size="15.36" fill="#e4e4e4" textLength="77.97" lengthAdjust="spacingAndGlyphs" >Acquisition</text>
<text x="1668.30" y="1033.90" font-size="14.49" fill="#111" textLength="39.52" lengthAdjust="spacingAndGlyphs" >Auto,</text>
<text x="1727.60" y="1033.90" font-size="14.49" fill="#111" textLength="56.05" lengthAdjust="spacingAndGlyphs" >Analyze</text>
<text x="1667.08" y="1052.60" font-size="14.49" fill="#111" textLength="115.88" lengthAdjust="spacingAndGlyphs" >High Res: 15 bits</text>
<text x="1667.62" y="1071.60" font-size="14.49" fill="#111" textLength="70.96" lengthAdjust="spacingAndGlyphs" >Single: 1/1</text>
<rect x="1821.8" y="998.9" width="88.6" height="34.2" rx="6" fill="#ff2424" stroke="#7d4a4a" stroke-width="1"/>
<text x="1840.22" y="1018.80" font-size="13.48" fill="#ffffff" font-weight="bold" textLength="51.11" lengthAdjust="spacingAndGlyphs" >Stopped</text>
<g opacity="0.93">
<circle cx="1790" cy="1054" r="17.6" fill="#f4f4f4"/><path d="M1781 1039 Q1794 1034 1797.7 1026.8 Q1802 1031 1801 1041 Z" fill="#f4f4f4"/>
</g>
<g fill="none" stroke="#5a5a5a" stroke-width="0.9"><path d="M1781.3 1051 L1797.5 1041.3 Q1800 1040 1801.5 1038.5"/><circle cx="1779.6" cy="1052.4" r="2.2" fill="#f4f4f4"/><path d="M1774 1066 Q1779 1068 1782 1066.5 L1798.3 1054"/><circle cx="1800" cy="1052.8" r="2.2" fill="#f4f4f4"/></g>
<path transform="translate(1813.0,1036.8)" d="M3 4 H13 V12 H3 Z M3 8 H13 M8 1 V14 Q8 17 12 17 H17" fill="none" stroke="#e6e6e6" stroke-width="2" stroke-linecap="round" stroke-linejoin="round"/>
<path transform="translate(1830.6,1036.8)" d="M4 3 H14 L9 8 M1 10 H17 M9 8 V15 Q9 18 6 16" fill="none" stroke="#e6e6e6" stroke-width="2" stroke-linecap="round" stroke-linejoin="round"/>
<path transform="translate(1848.2,1036.8)" d="M2 7 H16 M6 2 L4 7 M12 2 L14 4 M8 7 Q7 13 3 18 M8 11 H13 Q11 15 6 18 M9 13 Q12 17 16 18" fill="none" stroke="#e6e6e6" stroke-width="2" stroke-linecap="round" stroke-linejoin="round"/>
<path transform="translate(1865.8,1036.8)" d="M3 6 L2 10 M6 6 L7 9 M4.5 2 V11 Q4 15 1 18 M5 12 L8 17 M10 3 H16 M13 1 V6 M9 8 H17 M11 11 Q11 15 8 18 M14 11 V17 H17" fill="none" stroke="#e6e6e6" stroke-width="2" stroke-linecap="round" stroke-linejoin="round"/>
<path transform="translate(1883.4,1036.8)" d="M2 6 H16 M8 1 Q7 11 2 18 M6 10 H14 Q12 15 5 18 M8 13 Q12 17 17 17" fill="none" stroke="#e6e6e6" stroke-width="2" stroke-linecap="round" stroke-linejoin="round"/>
<text x="1813.46" y="1066.70" font-size="9.13" fill="#e6e6e6" font-weight="bold" textLength="98.21" lengthAdjust="spacingAndGlyphs" >www.elecfans.com</text>
</svg></body></html>
